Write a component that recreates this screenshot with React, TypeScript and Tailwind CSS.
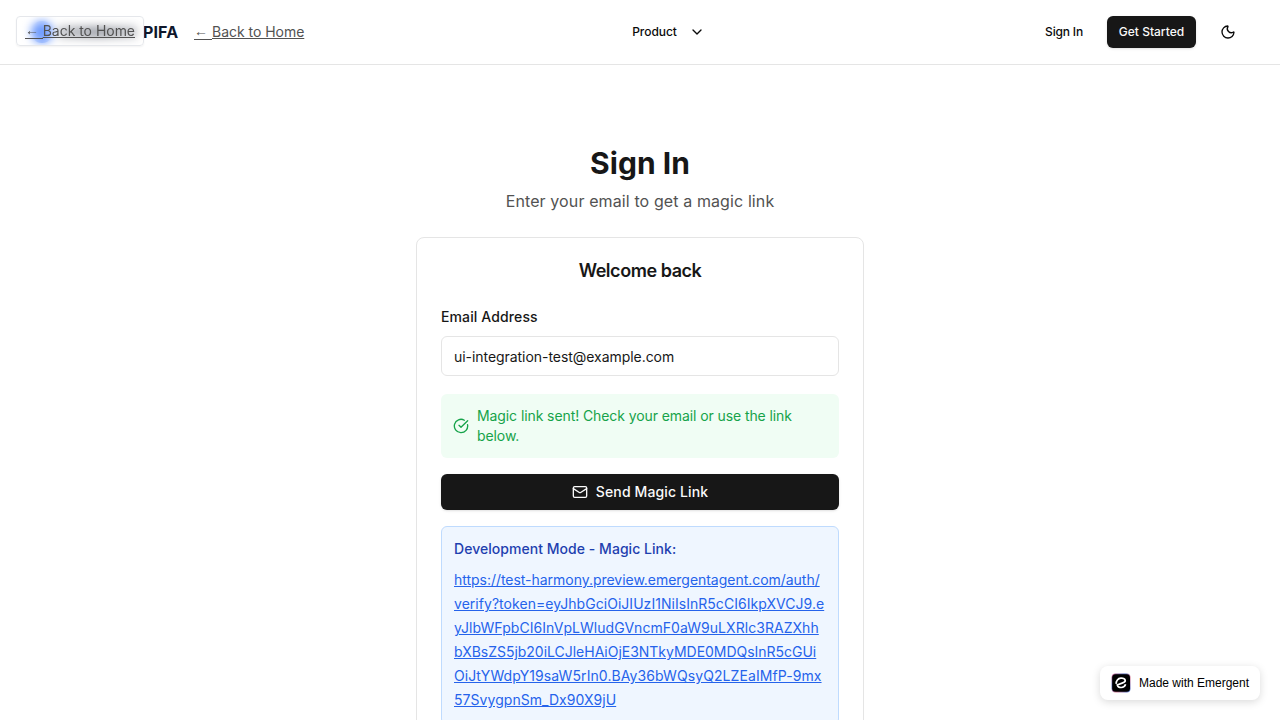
import { ChevronDown, CircleCheckBig, Mail, Moon } from "lucide-react";

function BackLabel() {
  return (
    <span className="flex h-5 items-start">
      <span className="flex h-[18px] w-[18px] items-start border-b border-[#525252] font-['Liberation_Sans',sans-serif] leading-[19px]">
        ←
      </span>
      <span className="tracking-[-0.03px] underline">Back to Home</span>
    </span>
  );
}

function Header() {
  return (
    <header className="h-[65px] shrink-0 border-b border-[#e5e5e5] bg-white">
      <div className="flex h-16 items-center justify-between pl-[31px] pr-9">
        <div className="flex w-[430px] items-center">
          <span className="size-[22px] rounded-full bg-blue-600" />
          <span className="ml-[5px] h-3 w-[79px] bg-linear-to-r from-slate-900/40 via-slate-900/65 to-slate-900/35" />
          <span className="ml-1.5 w-[35px] whitespace-nowrap text-base font-bold tracking-[0.12px] text-slate-900">PIFA</span>
          <a className="ml-4 text-sm text-[#525252]">
            <BackLabel />
          </a>
        </div>
        <button className="ml-8 flex items-center gap-3 text-xs font-medium tracking-[-0.06px] text-neutral-950">
          Product
          <ChevronDown className="size-4" />
        </button>
        <div className="flex w-[400px] items-center justify-end">
          <button className="px-3 text-xs font-medium tracking-[-0.17px] text-neutral-950">Sign In</button>
          <button className="ml-3 h-8 w-[89px] whitespace-nowrap rounded-md bg-neutral-900 text-center text-xs font-medium text-neutral-50 shadow-sm">
            Get Started
          </button>
          <button className="ml-4 flex size-8 items-center justify-center text-neutral-950">
            <Moon className="size-4" />
          </button>
        </div>
      </div>
    </header>
  );
}

function MagicLinkForm() {
  return (
    <section className="rounded-lg border border-[#e5e5e5] bg-white px-6 pb-6">
      <h2 className="pt-[19px] text-center text-lg font-semibold tracking-tight text-neutral-900">Welcome back</h2>
      <div className="mt-[25px] flex flex-col">
        <label className="text-sm font-medium leading-[14px] tracking-[0.12px] text-neutral-900">Email Address</label>
        <input
          className="mt-3 h-10 rounded-md border border-[#e5e5e5] px-3 text-sm tracking-[-0.05px] text-neutral-900 outline-none"
          defaultValue="ui-integration-test@example.com"
        />
        <div className="mt-[18px] flex items-center gap-2 rounded-md bg-[#f0fdf4] p-3 text-sm tracking-[-0.09px] text-[#16a34a]">
          <CircleCheckBig className="size-4 shrink-0" />
          <span>Magic link sent! Check your email or use the link below.</span>
        </div>
        <button className="mt-4 flex h-9 items-center justify-center gap-2 rounded-md bg-neutral-900 text-sm font-medium tracking-[0.12px] text-neutral-50 shadow-sm">
          <Mail className="size-4" />
          Send Magic Link
        </button>
        <div className="mt-4 rounded-md border border-[#bfdbfe] bg-[#eff6ff] p-3">
          <p className="text-sm font-medium tracking-[0.04px] text-[#1e40af]">Development Mode - Magic Link:</p>
          <a className="mt-[9px] block whitespace-nowrap text-sm leading-6 text-[#2563eb] underline">
            <span className="tracking-[-0.03px]">https://test-harmony.preview.emergentagent.com/auth/</span>
            <br />
            <span className="tracking-[0.04px]">verify?token=eyJhbGciOiJIUzI1NiIsInR5cCI6IkpXVCJ9.e</span>
            <br />
            <span className="tracking-[0.05px]">yJlbWFpbCI6InVpLWludGVncmF0aW9uLXRlc3RAZXhh</span>
            <br />
            <span className="tracking-[-0.02px]">bXBsZS5jb20iLCJleHAiOjE3NTkyMDE0MDQsInR5cGUi</span>
            <br />
            <span className="tracking-[0.09px]">OiJtYWdpY19saW5rIn0.BAy36bWQsyQ2LZEaIMfP-9mx</span>
            <br />
            <span className="tracking-[0.05px]">57SvygpnSm_Dx90X9jU</span>
          </a>
        </div>
      </div>
    </section>
  );
}

function EmergentBadge() {
  return (
    <a className="absolute bottom-5 right-5 flex h-[34px] w-40 items-center gap-2 rounded-lg bg-white pl-[11px] font-['Liberation_Sans',sans-serif] text-xs text-black shadow-[0_2px_8px_rgba(0,0,0,0.15)]">
      <svg className="size-5" viewBox="0 0 20 20" fill="none">
        <defs>
          <linearGradient id="edge" x1="0" y1="0" x2="20" y2="20" gradientUnits="userSpaceOnUse">
            <stop stopColor="#e05a80" />
            <stop offset=".35" stopColor="#4161b5" />
            <stop offset=".6" stopColor="#d87590" />
            <stop offset="1" stopColor="#2c6fd1" />
          </linearGradient>
        </defs>
        <rect x=".6" y=".4" width="18.9" height="19" rx="4" fill="url(#edge)" />
        <rect x="1.2" y="1.2" width="17.8" height="17.6" rx="3.6" fill="#000" />
        <path
          d="M5.3 10.9C4.9 7.7 7 5.4 9.9 5.2c2.2-.1 3.9.7 4.3 2.1.3 1.300-.9 2.100-2.500 2.600L6.300 11.900c.6 1.900 2.100 2.700 4 2.600 2-.1 3.600-1.200 4.300-3.300"
          stroke="#fff"
          strokeWidth="1.7"
        />
      </svg>
      <span className="whitespace-nowrap">Made with Emergent</span>
    </a>
  );
}

export default function App() {
  return (
    <div className="relative flex h-[720px] flex-col overflow-hidden bg-white font-[Inter,sans-serif]">
      <Header />
      <a className="absolute left-4 top-4 z-10 block h-[30px] w-32 whitespace-nowrap rounded border border-[#e5e7eb] bg-white/40 px-2 py-1 text-sm text-[#525252] shadow-xs backdrop-blur-xs">
        <BackLabel />
      </a>
      <main className="mx-auto w-[448px] pt-20">
        <h1 className="text-center text-3xl font-bold tracking-[0.05px] text-neutral-900">Sign In</h1>
        <p className="mb-6 mt-2 text-center text-base tracking-[0.11px] text-[#525252]">
          Enter your email to get a magic link
        </p>
        <MagicLinkForm />
      </main>
      <EmergentBadge />
    </div>
  );
}
